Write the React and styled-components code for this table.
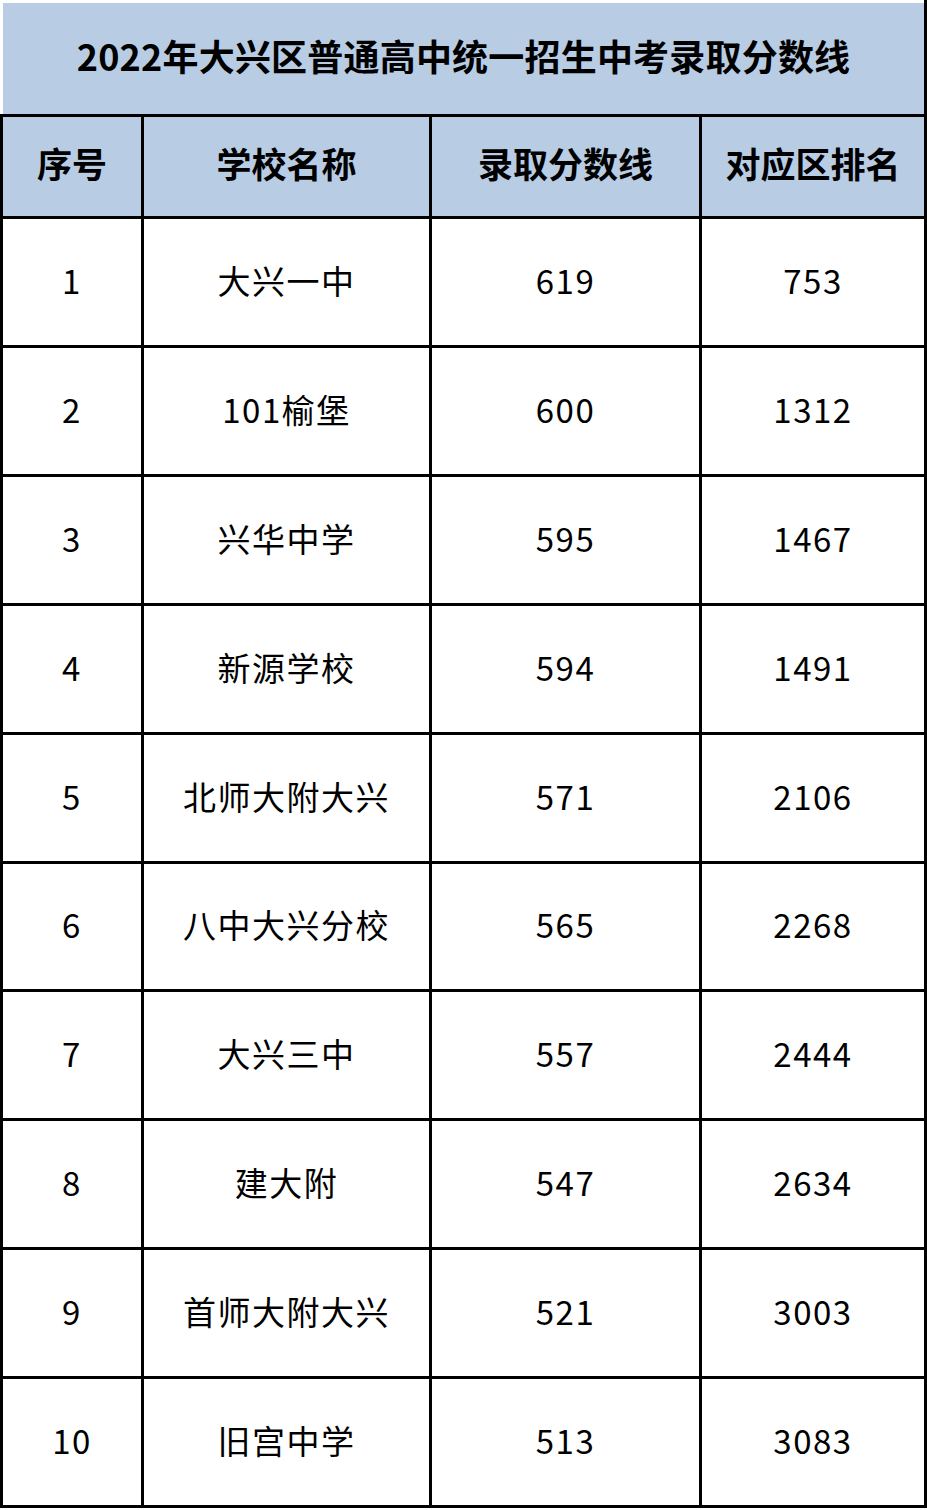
import React from "react";
import styled, { createGlobalStyle } from "styled-components";

const Global = createGlobalStyle`
  html, body { margin: 0; padding: 0; background: #ffffff; }
  body { font-family: "Noto Sans CJK SC", "Noto Sans", sans-serif; color: #000; }
`;

const Page = styled.div`
  width: 927px;
  height: 1510px;
  background: #ffffff;
`;

const TitleRow = styled.div`
  display: flex;
  height: 114px;
  padding: 3px 0 0 3px;
  box-sizing: border-box;
`;

const Title = styled.div`
  flex: 1;
  background: #b8cce4;
  display: flex;
  align-items: center;
  justify-content: center;
  font-size: 36px;
  font-weight: 700;
  letter-spacing: 0.2px;
  padding-bottom: 8px;
`;

const RightEdge = styled.div`
  width: 3px;
  margin-top: -3px;
  background: #000;
`;

const Table = styled.div`
  display: grid;
  grid-template-columns: 138px 285px 267px 222px;
  grid-template-rows: 99px repeat(10, 1fr);
  gap: 3px;
  padding: 3px;
  background: #000;
  height: 1394px;
  box-sizing: border-box;
`;

const Cell = styled.div`
  background: ${(p) => (p.$head ? "#b8cce4" : "#ffffff")};
  display: flex;
  align-items: center;
  justify-content: center;
  font-size: ${(p) => (p.$head ? "35px" : "33px")};
  font-weight: ${(p) => (p.$head ? 700 : 400)};
  letter-spacing: ${(p) => (p.$head ? "0" : "1.5px")};
  padding-bottom: ${(p) => (p.$head ? "9px" : "4px")};
`;

const headers = ["序号", "学校名称", "录取分数线", "对应区排名"];
const rows = [
  ["1", "大兴一中", "619", "753"],
  ["2", "101榆堡", "600", "1312"],
  ["3", "兴华中学", "595", "1467"],
  ["4", "新源学校", "594", "1491"],
  ["5", "北师大附大兴", "571", "2106"],
  ["6", "八中大兴分校", "565", "2268"],
  ["7", "大兴三中", "557", "2444"],
  ["8", "建大附", "547", "2634"],
  ["9", "首师大附大兴", "521", "3003"],
  ["10", "旧宫中学", "513", "3083"],
];

export default function App() {
  return (
    <Page>
      <Global />
      <TitleRow>
        <Title>2022年大兴区普通高中统一招生中考录取分数线</Title>
        <RightEdge />
      </TitleRow>
      <Table>
        {headers.map((h) => (
          <Cell key={h} $head>
            {h}
          </Cell>
        ))}
        {rows.map((r) =>
          r.map((v, i) => <Cell key={r[0] + "-" + i}>{v}</Cell>)
        )}
      </Table>
    </Page>
  );
}
